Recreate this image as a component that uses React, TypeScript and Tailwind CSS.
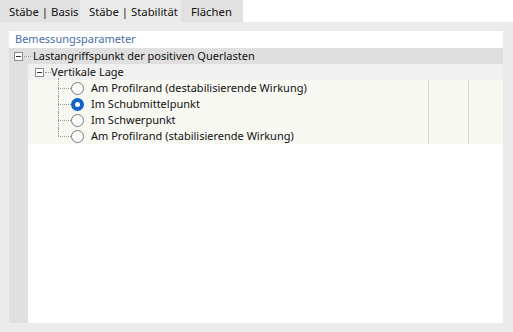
import React from "react";

const font = { fontFamily: '"Segoe UI", "Noto Sans", "Open Sans", sans-serif' };

function Expander() {
  return (
    <div className="w-[9px] h-[9px] border border-[#8c8c8c] bg-white flex items-center justify-center shrink-0">
      <div className="w-[5px] h-[1px] bg-[#333]" />
    </div>
  );
}

function Radio({ checked }: { checked?: boolean }) {
  if (checked) {
    return (
      <div className="w-[13px] h-[13px] rounded-full bg-[#0f63c9] flex items-center justify-center shrink-0">
        <div className="w-[5px] h-[5px] rounded-full bg-white" />
      </div>
    );
  }
  return <div className="w-[13px] h-[13px] rounded-full border border-[#7a7a7a] bg-[#fbfbfb] shrink-0" />;
}

const options = [
  { label: "Am Profilrand (destabilisierende Wirkung)", checked: false },
  { label: "Im Schubmittelpunkt", checked: true },
  { label: "Im Schwerpunkt", checked: false },
  { label: "Am Profilrand (stabilisierende Wirkung)", checked: false },
];

export default function App() {
  return (
    <div className="w-[513px] h-[332px] bg-white flex flex-col text-[11px] text-[#111] whitespace-nowrap" style={font}>
      {/* tabs */}
      <div className="flex h-[22px] text-[11.3px]">
        <div className="w-[80px] bg-[#e1e1e1] flex items-center pl-[9px] pt-[3px]">Stäbe | Basis</div>
        <div className="w-[101px] bg-[#ebebeb] flex items-center pl-[9px] pt-[3px]">Stäbe | Stabilität</div>
        <div className="w-[62px] bg-[#e1e1e1] flex items-center pl-[10px] pt-[3px]">Flächen</div>
      </div>

      {/* panel */}
      <div className="flex-1 bg-[#ebebeb] pt-[9px] pl-[9px] pr-[10px] pb-[9px] flex">
        <div className="flex-1 bg-white flex flex-col">
          <div className="h-[17px] flex items-center pl-[6px] text-[#4a6ea8]">Bemessungsparameter</div>

          {/* row 1 */}
          <div className="h-[16px] bg-[#dfdfdf] flex items-center pl-[5px]">
            <Expander />
            <div className="w-[7px] ml-[1px] border-t border-dotted border-[#9a9a9a]" />
            <span className="ml-[2px]">Lastangriffspunkt der positiven Querlasten</span>
          </div>

          <div className="flex-1 flex">
            <div className="w-[19px] bg-[#e0e0e0]" />
            <div className="flex-1 flex flex-col">
              {/* row 2 */}
              <div className="h-[16px] bg-[#f0f0f0] flex items-center pl-[7px]">
                <Expander />
                <div className="w-[6px] ml-[1px] border-t border-dotted border-[#9a9a9a]" />
                <span>Vertikale Lage</span>
              </div>

              {/* radio rows */}
              <div className="flex bg-[#f7f8f2]">
                <div className="w-[400px] flex flex-col pl-[30px]">
                  {options.map((o, i) => (
                    <div key={o.label} className="h-[16px] flex items-center relative">
                      <div
                        className={
                          "absolute left-0 w-0 border-l border-dotted border-[#9a9a9a] " +
                          (i === 0 ? "top-[-2px] bottom-0" : i === 3 ? "top-0 h-[8px]" : "top-0 bottom-0")
                        }
                      />
                      <div className="w-[13px] border-t border-dotted border-[#9a9a9a]" />
                      <Radio checked={o.checked} />
                      <span className="ml-[7px]">{o.label}</span>
                    </div>
                  ))}
                </div>
                <div className="w-[40px] border-l border-[#d4d4d4]" />
                <div className="flex-1 border-l border-[#d4d4d4]" />
              </div>
            </div>
          </div>
        </div>
      </div>
    </div>
  );
}
